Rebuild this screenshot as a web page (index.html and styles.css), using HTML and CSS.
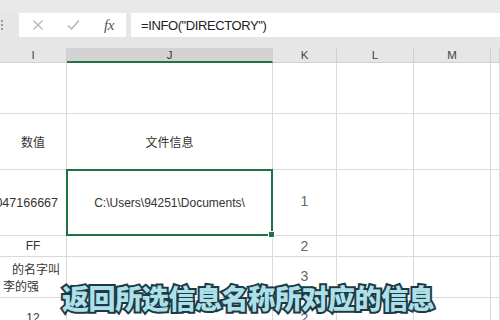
FILE: index.html
```html
<!DOCTYPE html>
<html>
<head>
<meta charset="utf-8">
<link rel="stylesheet" href="styles.css">
</head>
<body>
<div class="app">
  <div class="topstrip"></div>
  <div class="fbar">
    <div class="grip"><span></span><span></span><span></span></div>
    <div class="btnbox">
      <svg class="ico" width="12" height="12" viewBox="0 0 12 12"><path d="M1.5 1.5L10.5 10.5M10.5 1.5L1.5 10.5" stroke="#b3b3b3" stroke-width="1.2" fill="none"/></svg>
      <svg class="ico" width="13" height="12" viewBox="0 0 13 12"><path d="M1 6.5L4.5 10L12 1.5" stroke="#b3b3b3" stroke-width="1.4" fill="none"/></svg>
      <span class="fx">fx</span>
    </div>
    <div class="formula">=INFO("DIRECTORY")</div>
  </div>
  <div class="gap"></div>
  <div class="sheet">
    <div class="hd">I</div>
    <div class="hd sel">J</div>
    <div class="hd">K</div>
    <div class="hd">L</div>
    <div class="hd">M</div>
    <div class="hd"></div>

    <div class="c"></div><div class="c"></div><div class="c"></div><div class="c"></div><div class="c"></div><div class="c"></div>

    <div class="c zh">数值</div><div class="c zh">文件信息</div><div class="c"></div><div class="c"></div><div class="c"></div><div class="c"></div>

    <div class="c right">047166667</div><div class="c active">C:\Users\94251\Documents\</div><div class="c num up">1</div><div class="c"></div><div class="c"></div><div class="c"></div>

    <div class="c">FF</div><div class="c"></div><div class="c num">2</div><div class="c"></div><div class="c"></div><div class="c"></div>

    <div class="c wrap zh"><span class="l1">的名字叫</span><span class="l2">李的强</span></div><div class="c"></div><div class="c num up">3</div><div class="c"></div><div class="c"></div><div class="c"></div>

    <div class="c">12</div><div class="c"></div><div class="c num">2</div><div class="c"></div><div class="c"></div><div class="c"></div>
  </div>
  <div class="subtitle">返回所选信息名称所对应的信息</div>
</div>
</body>
</html>
```

FILE: styles.css
```css
* { box-sizing: border-box; }
html, body { margin: 0; padding: 0; }
body { width: 500px; height: 320px; overflow: hidden; background: #e6e6e6; font-family: "Liberation Sans", "Noto Sans CJK SC", sans-serif; }
.app { position: relative; width: 500px; height: 320px; overflow: hidden; }
.topstrip { height: 13px; background: #e9e9e9; }
.fbar { height: 24px; display: flex; align-items: stretch; background: #e6e6e6; }
.grip { width: 19px; display: flex; flex-direction: column; justify-content: center; gap: 2px; padding-left: 1px; }
.grip span { width: 2px; height: 2px; background: #9a9a9a; display: block; }
.btnbox { width: 107px; background: #fff; display: flex; align-items: center; padding-left: 13px; }
.btnbox .ico:nth-child(2) { margin-left: 23px; }
.fx { margin-left: 24px; font-family: "Liberation Serif", serif; font-style: italic; font-size: 15px; color: #555; letter-spacing: -0.5px; }
.formula { flex: 1; margin-left: 5px; background: #fff; display: flex; align-items: center; padding-left: 10px; font-size: 13px; color: #222; letter-spacing: -0.4px; }
.gap { height: 11px; }
.sheet { display: grid; grid-template-columns: 67px 206px 64px 77px 77px 1fr; grid-template-rows: 15px 51px 56px 66px 21px 41px 40px; background: #fff; }
.hd { background: #e6e6e6; border-right: 1px solid #cfcfcf; font-size: 11.5px; color: #444; display: flex; align-items: center; justify-content: center; border-bottom: 1px solid #d0d0d0; }
.hd.sel { background: #d3d3d3; border-bottom: 2px solid #217346; color: #333; }
.c { border-right: 1px solid #dadada; border-bottom: 1px solid #dadada; display: flex; align-items: center; justify-content: center; font-size: 12px; color: #333; white-space: nowrap; overflow: hidden; }
.zh { font-family: "Noto Sans CJK SC", sans-serif; font-size: 12px; }
.right { justify-content: flex-end; padding-right: 8px; font-size: 12.5px; }
.num { font-size: 14px; color: #666; }
.up { padding-bottom: 3px; }
.active { position: relative; overflow: visible; }
.active::after { content: ""; position: absolute; left: -1px; top: -1px; right: -1px; bottom: -1px; border: 2px solid #217346; }
.active::before { content: ""; position: absolute; right: -3px; bottom: -3px; width: 5px; height: 5px; background: #217346; border: 1px solid #fff; z-index: 2; }
.wrap { flex-direction: column; align-items: flex-start; justify-content: center; line-height: 17px; }
.l1 { padding-left: 12px; }
.l2 { padding-left: 3px; }
.subtitle { position: absolute; left: 62px; top: 280px; font-family: "Noto Sans CJK SC", sans-serif; font-weight: 900; font-size: 27px; line-height: 36px; letter-spacing: -0.4px; color: #aee0ea; -webkit-text-stroke: 4px #1d3944; paint-order: stroke fill; white-space: nowrap; }
```
